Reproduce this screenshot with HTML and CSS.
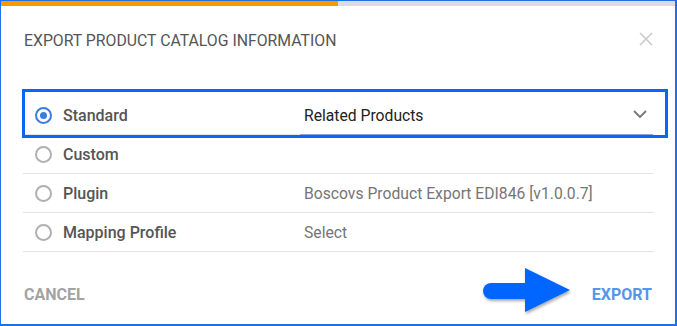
FILE: index.html
```html
<!DOCTYPE html>
<html lang="en">
<head>
    <meta charset="UTF-8">
    <meta name="viewport" content="width=device-width, initial-scale=1.0">
    <title>Export Product Catalog Information</title>
    <link rel="stylesheet" href="styles.css">
</head>
<body>
<div class="frame">
    <div class="progress">
        <div class="progress-fill"></div>
    </div>

    <div class="dialog-header">
        <h5 class="dialog-title">Export Product Catalog Information</h5>
        <button class="close-btn" aria-label="Close">
            <svg width="14" height="14" viewBox="0 0 14 14">
                <path d="M1 1 L13 13 M13 1 L1 13" stroke="#c9c9c9" stroke-width="1.6" fill="none"/>
            </svg>
        </button>
    </div>

    <div class="options">
        <div class="focus-ring"></div>

        <div class="option-row">
            <label class="option-label">
                <span class="radio checked"></span>
                <span class="option-name">Standard</span>
            </label>
            <div class="option-value select">
                <span class="value-text dark">Related Products</span>
                <svg class="chevron" width="14" height="8" viewBox="0 0 14 8">
                    <path d="M1 1 L7 7 L13 1" stroke="#777" stroke-width="1.8" fill="none"/>
                </svg>
            </div>
        </div>

        <div class="option-row">
            <label class="option-label">
                <span class="radio"></span>
                <span class="option-name">Custom</span>
            </label>
            <div class="option-value"></div>
        </div>

        <div class="option-row">
            <label class="option-label">
                <span class="radio"></span>
                <span class="option-name">Plugin</span>
            </label>
            <div class="option-value">
                <span class="value-text">Boscovs Product Export EDI846 [v1.0.0.7]</span>
            </div>
        </div>

        <div class="option-row">
            <label class="option-label">
                <span class="radio"></span>
                <span class="option-name">Mapping Profile</span>
            </label>
            <div class="option-value">
                <span class="value-text">Select</span>
            </div>
        </div>
    </div>

    <div class="dialog-footer">
        <button class="btn-text btn-cancel">Cancel</button>
        <button class="btn-text btn-export">Export</button>
        <svg class="pointer-arrow" width="100" height="60" viewBox="0 0 100 60">
            <defs>
                <filter id="arrowShadow" x="-20%" y="-20%" width="140%" height="150%">
                    <feDropShadow dx="1" dy="2" stdDeviation="1.5" flood-color="#000" flood-opacity="0.35"/>
                </filter>
            </defs>
            <g filter="url(#arrowShadow)">
                <rect x="3" y="18" width="52" height="16" rx="8" fill="#0066ff"/>
                <polygon points="45,3 45,47 90,25" fill="#0066ff"/>
            </g>
        </svg>
    </div>
</div>
</body>
</html>
```

FILE: styles.css
```css
body, html {
    margin: 0;
    height: 100%;
    background: #fff;
}
.frame {
    position: relative;
    height: 326px;
    box-sizing: border-box;
    border: 1px solid #1f6fe5;
    border-right-width: 2px;
    border-bottom-width: 2px;
    font-family: Roboto, "Liberation Sans", Arial, sans-serif;
    background: #fff;
}
.progress {
    height: 5px;
    background-color: #dcdcdc;
}
.progress-fill {
    width: 337px;
    height: 100%;
    background-color: #ff9800;
}
.dialog-header {
    height: 68px;
    padding: 0 22px 0 23px;
    display: flex;
    align-items: center;
    justify-content: space-between;
}
.dialog-title {
    margin: 0;
    font-size: 15.8px;
    font-weight: 400;
    color: #555;
    text-transform: uppercase;
}
.close-btn {
    border: none;
    background: none;
    padding: 0;
    width: 14px;
    height: 14px;
    margin-top: -3px;
    display: flex;
}
.options {
    position: relative;
    margin: 22px 22px 0 22px;
}
.focus-ring {
    position: absolute;
    top: -7px;
    left: -1px;
    width: 646px;
    height: 49px;
    box-sizing: border-box;
    border: 3px solid #0a66f5;
    z-index: 2;
}
.option-row {
    display: grid;
    grid-template-columns: 277px 1fr;
    height: 39px;
    box-sizing: border-box;
    border-bottom: 1px solid #e3e3e3;
}
.option-label {
    display: flex;
    align-items: center;
    gap: 11px;
    padding-left: 12px;
}
.radio {
    width: 17px;
    height: 17px;
    box-sizing: border-box;
    border: 2px solid #b0b0b0;
    border-radius: 50%;
    display: flex;
    align-items: center;
    justify-content: center;
}
.radio.checked {
    border-color: #3b7ddd;
}
.radio.checked::after {
    content: "";
    width: 7px;
    height: 7px;
    border-radius: 50%;
    background-color: #3b7ddd;
}
.option-name {
    font-size: 16px;
    font-weight: 500;
    color: #555;
}
.option-value {
    display: flex;
    align-items: center;
    justify-content: space-between;
    padding-left: 4px;
    padding-right: 6px;
}
.select {
    border-bottom: 1px solid #8aa6dc;
    margin-bottom: -1px;
}
.value-text {
    font-size: 15.7px;
    color: #757575;
}
.value-text.dark {
    color: #222;
}
.chevron {
    margin-top: -3px;
}
.dialog-footer {
    position: relative;
    height: 60px;
    margin-top: 12px;
    padding: 0 23px 0 23px;
    display: flex;
    align-items: center;
    justify-content: space-between;
}
.btn-text {
    border: none;
    background: none;
    padding: 0;
    font-family: Roboto, "Liberation Sans", Arial, sans-serif;
    font-size: 16px;
    font-weight: 700;
    text-transform: uppercase;
}
.btn-cancel {
    color: #a3a3a3;
}
.btn-export {
    color: #5596e8;
}
.pointer-arrow {
    position: absolute;
    left: 479px;
    top: 1px;
}
```
